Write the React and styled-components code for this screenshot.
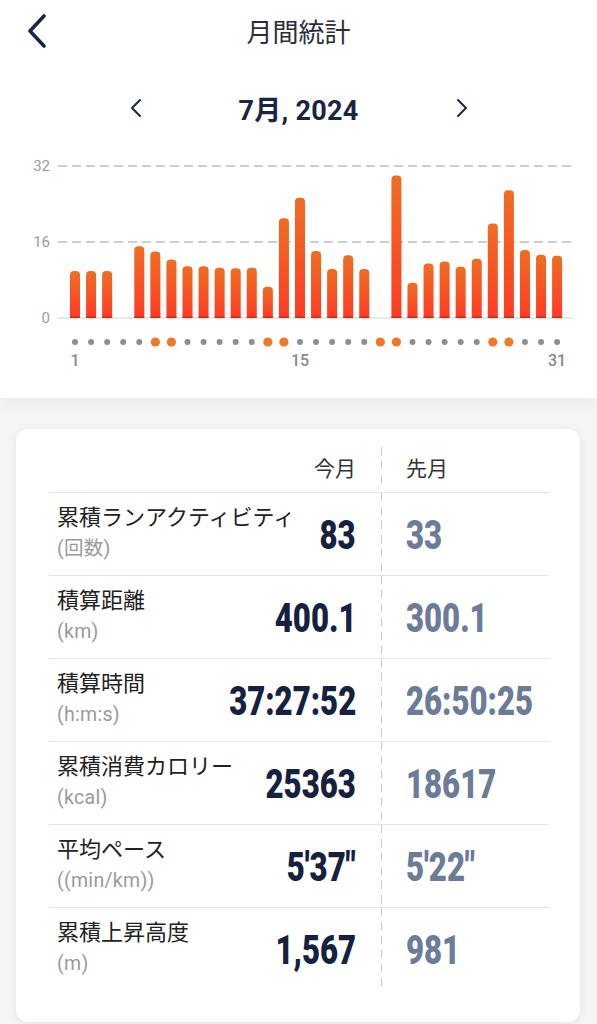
import styled, { createGlobalStyle } from "styled-components";

const GlobalStyle = createGlobalStyle`
  body {
    margin: 0;
    background: #f5f5f5;
    font-family: Roboto, "Noto Sans CJK JP", sans-serif;
  }
`;

const days = [9.9, 9.9, 9.9, 0, 15.1, 14, 12.3, 10.9, 10.9, 10.6, 10.5, 10.6, 6.6, 21, 25.3, 14.1, 10.3, 13.2, 10.3, 0, 30, 7.4, 11.5, 11.9, 10.8, 12.5, 19.9, 26.9, 14.3, 13.3, 13.1];
const weekends = [6, 7, 13, 14, 20, 21, 27, 28];

const stats = [
  { label: "累積ランアクティビティ", unit: "(回数)", current: "83", last: "33" },
  { label: "積算距離", unit: "(km)", current: "400.1", last: "300.1" },
  { label: "積算時間", unit: "(h:m:s)", current: "37:27:52", last: "26:50:25" },
  { label: "累積消費カロリー", unit: "(kcal)", current: "25363", last: "18617" },
  { label: "平均ペース", unit: "((min/km))", current: "5'37\"", last: "5'22\"" },
  { label: "累積上昇高度", unit: "(m)", current: "1,567", last: "981" },
];

const BASE = 168;
const UNIT = 4.75;
const dayX = (i) => 75 + i * 16.07;

function barPath(cx, v) {
  const w = 10, r = 4;
  const x = cx - w / 2;
  const top = BASE - v * UNIT;
  return `M${x},${BASE} V${top + r} Q${x},${top} ${x + r},${top} H${x + w - r} Q${x + w},${top} ${x + w},${top + r} V${BASE} Z`;
}

function Chart() {
  return (
    <ChartSvg width="597" height="226" viewBox="0 0 597 226">
      <defs>
        <linearGradient id="bar" x1="0" y1="0" x2="0" y2="1">
          <stop offset="0" stopColor="#ee6e22" />
          <stop offset="1" stopColor="#ff3b25" />
        </linearGradient>
      </defs>
      {[32, 16].map((v) => (
        <line key={v} x1="58" x2="573" y1={BASE - v * UNIT} y2={BASE - v * UNIT} stroke="#bdbdbd" strokeWidth="1.3" strokeDasharray="9 5" />
      ))}
      <line x1="58" x2="573" y1={BASE} y2={BASE} stroke="#e2e2e2" strokeWidth="1.3" />
      {[32, 16, 0].map((v) => (
        <text key={v} x="50" y={BASE - v * UNIT} textAnchor="end" dominantBaseline="central" fontSize="15" fill="#9c9c9c">{v}</text>
      ))}
      {days.map((v, i) =>
        v > 0 ? (
          <g key={i}>
            <path d={barPath(dayX(i), v)} fill="url(#bar)" />
            <rect x={dayX(i) - 5} y={BASE - 1.5} width="10" height="1.5" fill="#e0221b" />
          </g>
        ) : null
      )}
      {days.map((_, i) => {
        const weekend = weekends.includes(i + 1);
        return <circle key={i} cx={dayX(i)} cy="192" r={weekend ? 4.6 : 3} fill={weekend ? "#f0782a" : "#8e8e8e"} />;
      })}
      {[1, 15, 31].map((d) => (
        <text key={d} x={dayX(d - 1)} y="210" textAnchor="middle" dominantBaseline="central" fontSize="16" fontWeight="500" fill="#8a8a8a">{d}</text>
      ))}
    </ChartSvg>
  );
}

export default function App() {
  return (
    <Page>
      <GlobalStyle />
      <TopSection>
        <Header>
          <BackButton>
            <svg width="22" height="34" viewBox="0 0 22 34">
              <path d="M18 2 L4 17 L18 32" fill="none" stroke="#1b2545" strokeWidth="3.6" strokeLinecap="round" strokeLinejoin="round" />
            </svg>
          </BackButton>
          <Title>月間統計</Title>
          <span />
        </Header>
        <MonthRow>
          <Arrow>
            <svg width="12" height="20" viewBox="0 0 12 20">
              <path d="M10 2 L2 10 L10 18" fill="none" stroke="#1b2545" strokeWidth="2" strokeLinecap="round" strokeLinejoin="round" />
            </svg>
          </Arrow>
          <MonthTitle>7月, 2024</MonthTitle>
          <Arrow>
            <svg width="12" height="20" viewBox="0 0 12 20">
              <path d="M2 2 L10 10 L2 18" fill="none" stroke="#1b2545" strokeWidth="2" strokeLinecap="round" strokeLinejoin="round" />
            </svg>
          </Arrow>
        </MonthRow>
        <Chart />
      </TopSection>
      <Card>
        <Row $head>
          <HeadCell>今月</HeadCell>
          <Divider />
          <HeadCell $left>先月</HeadCell>
        </Row>
        {stats.map((s, i) => (
          <Row key={s.label} $last={i === stats.length - 1}>
            <LabelCell>
              <LabelBlock>
                <Label>{s.label}</Label>
                <Unit>{s.unit}</Unit>
              </LabelBlock>
              <ValueCell>
                <Value>{s.current}</Value>
              </ValueCell>
            </LabelCell>
            <Divider />
            <ValueCell $prev>
              <Value $prev>{s.last}</Value>
            </ValueCell>
          </Row>
        ))}
      </Card>
    </Page>
  );
}

const Page = styled.div`
  min-height: 1024px;
  background: #f5f5f5;
  padding-bottom: 3px;
`;

const TopSection = styled.div`
  background: #fff;
  padding-bottom: 22px;
  box-shadow: 0 4px 18px rgba(0, 0, 0, 0.06);
  position: relative;
`;

const Header = styled.div`
  display: grid;
  grid-template-columns: 70px 1fr 70px;
  align-items: center;
  height: 60px;
`;

const BackButton = styled.div`
  display: flex;
  align-items: center;
  padding-left: 26px;
  padding-top: 2px;
`;

const Title = styled.div`
  text-align: center;
  font-size: 26px;
  color: #2b2e3b;
  font-family: "Noto Sans CJK JP", sans-serif;
`;

const MonthRow = styled.div`
  display: flex;
  justify-content: center;
  align-items: center;
  margin-top: 24px;
  height: 48px;
`;

const Arrow = styled.div`
  width: 12px;
  display: flex;
  align-items: center;
`;

const MonthTitle = styled.div`
  width: 314px;
  text-align: center;
  font-size: 27px;
  font-weight: 700;
  letter-spacing: 0.3px;
  color: #1b2440;
  font-family: Roboto, "Noto Sans CJK JP", sans-serif;
`;

const ChartSvg = styled.svg`
  display: block;
  margin-top: 18px;
  font-family: Roboto, sans-serif;
`;

const Card = styled.div`
  margin: 31px 17px 0 16px;
  background: #fff;
  border-radius: 12px;
  box-shadow: 0 2px 10px rgba(0, 0, 0, 0.07);
  padding: 18px 31px 31px 33px;
`;

const Row = styled.div`
  display: grid;
  grid-template-columns: 307px 50px 1fr;
  align-items: stretch;
  height: ${(p) => (p.$head ? "46px" : "83px")};
  padding-bottom: ${(p) => (p.$head ? "5px" : "0")};
  border-bottom: ${(p) => (p.$last ? "none" : "1.5px solid #e4e4e4")};
  box-sizing: border-box;
`;

const HeadCell = styled.div`
  display: flex;
  align-items: center;
  justify-content: ${(p) => (p.$left ? "flex-start" : "flex-end")};
  font-size: 21px;
  color: #333;
  font-family: "Noto Sans CJK JP", sans-serif;
`;

const Divider = styled.div`
  justify-self: center;
  width: 1px;
  background: repeating-linear-gradient(to bottom, #c8c8c8 0 8px, transparent 8px 14px);
`;

const LabelCell = styled.div`
  display: flex;
  justify-content: space-between;
  align-items: center;
  padding-left: 8px;
`;

const LabelBlock = styled.div`
  display: flex;
  flex-direction: column;
  align-self: flex-start;
  padding-top: 9px;
  white-space: nowrap;
`;

const Label = styled.div`
  font-size: 22px;
  line-height: 26px;
  color: #222;
  font-family: "Noto Sans CJK JP", sans-serif;
`;

const Unit = styled.div`
  font-size: 19.5px;
  line-height: 24px;
  margin-top: 9px;
  letter-spacing: 0.3px;
  color: #9a9a9a;
  font-family: Roboto, "Noto Sans CJK JP", sans-serif;
`;

const ValueCell = styled.div`
  display: flex;
  align-items: center;
  justify-content: ${(p) => (p.$prev ? "flex-start" : "flex-end")};
  padding-top: 2px;
`;

const Value = styled.span`
  display: inline-block;
  font-family: Roboto, sans-serif;
  font-weight: 900;
  font-size: 41px;
  line-height: 1;
  transform: scaleX(0.76);
  transform-origin: ${(p) => (p.$prev ? "left center" : "right center")};
  white-space: nowrap;
  color: ${(p) => (p.$prev ? "#6c7b96" : "#16213f")};
`;
